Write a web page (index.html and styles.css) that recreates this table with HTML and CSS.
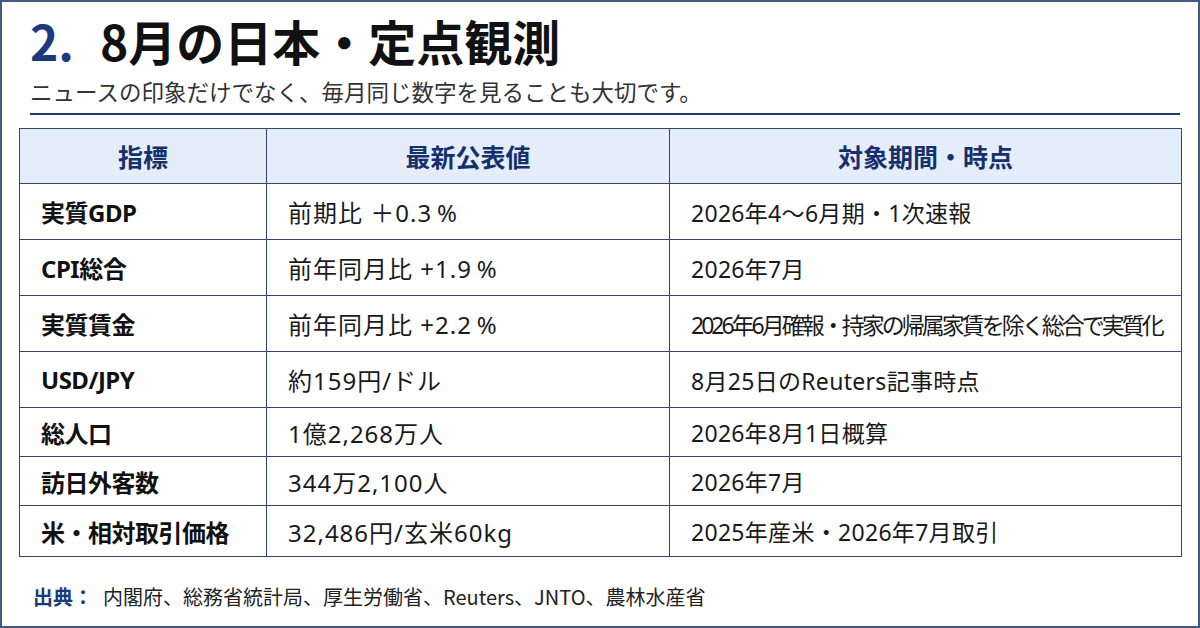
FILE: index.html
```html
<!DOCTYPE html>
<html lang="ja">
<head>
<meta charset="utf-8">
<link rel="stylesheet" href="styles.css">
</head>
<body>
<div class="page">
  <header class="head">
    <h1 class="title"><span class="num">2.</span>8月の日本・定点観測</h1>
    <p class="sub">ニュースの印象だけでなく、毎月同じ数字を見ることも大切です。</p>
    <div class="rule"></div>
  </header>
  <table class="data">
    <colgroup>
      <col class="c1"><col class="c2"><col class="c3">
    </colgroup>
    <thead>
      <tr><th>指標</th><th>最新公表値</th><th>対象期間・時点</th></tr>
    </thead>
    <tbody>
      <tr class="tall"><td class="k">実質GDP</td><td class="v">前期比 ＋0.3&#8201;%</td><td class="p">2026年4～6月期・1次速報</td></tr>
      <tr class="tall"><td class="k">CPI総合</td><td class="v">前年同月比 +1.9&#8201;%</td><td class="p">2026年7月</td></tr>
      <tr class="tall"><td class="k">実質賃金</td><td class="v">前年同月比 +2.2&#8201;%</td><td class="p tight">2026年6月確報・持家の帰属家賃を除く総合で実質化</td></tr>
      <tr class="tall"><td class="k">USD/JPY</td><td class="v">約159円/ドル</td><td class="p">8月25日のReuters記事時点</td></tr>
      <tr class="short"><td class="k">総人口</td><td class="v">1億2,268万人</td><td class="p">2026年8月1日概算</td></tr>
      <tr class="short"><td class="k">訪日外客数</td><td class="v">344万2,100人</td><td class="p">2026年7月</td></tr>
      <tr class="last"><td class="k">米・相対取引価格</td><td class="v">32,486円/玄米60kg</td><td class="p">2025年産米・2026年7月取引</td></tr>
    </tbody>
  </table>
  <footer class="foot"><span class="src">出典：</span>内閣府、総務省統計局、厚生労働省、Reuters、JNTO、農林水産省</footer>
</div>
</body>
</html>
```
FILE: styles.css
```css
html, body {
  margin: 0;
  padding: 0;
  background: #ffffff;
}
body {
  font-family: "Noto Sans CJK JP", "Noto Sans", sans-serif;
  color: #111111;
}
.page {
  width: 1200px;
  height: 628px;
  box-sizing: border-box;
  border: 2px solid #44577f;
  padding: 0 17px;
  display: flex;
  flex-direction: column;
}
.head {
  padding: 0 1px 0 11px;
}
.title {
  margin: 0;
  padding-top: 8px;
  font-size: 48px;
  line-height: 60px;
  font-weight: 700;
  color: #111111;
}
.num {
  color: #1b3a7c;
  margin-right: 26px;
}
.sub {
  margin: 8px 0 0 0;
  font-size: 22.5px;
  line-height: 26px;
  color: #333333;
  font-weight: 400;
}
.rule {
  margin-top: 9px;
  height: 2px;
  background: #1e3672;
}
.data {
  margin-top: 13px;
  width: 1162px;
  border-collapse: collapse;
  table-layout: fixed;
  border: 1.5px solid #2b3c6b;
}
.c1 { width: 247px; }
.c2 { width: 403px; }
.c3 { width: 512px; }
.data th, .data td {
  border: 1.5px solid #34466f;
  padding: 0 0 0 21px;
  vertical-align: middle;
  white-space: nowrap;
  font-family: "Noto Sans", "Noto Sans CJK JP", sans-serif;
}
.data th {
  height: 54px;
  background: #e4edf9;
  color: #16306e;
  font-size: 25px;
  font-weight: 700;
  text-align: center;
  padding: 0;
}
.tall td { height: 55px; }
.short td { height: 48px; }
.last td { height: 50px; }
.k {
  font-size: 24px;
  font-weight: 700;
  color: #111111;
  letter-spacing: -0.5px;
}
.v {
  font-size: 24px;
  letter-spacing: 1px;
  color: #1a1a1a;
}
.p {
  font-size: 23px;
  letter-spacing: 0.3px;
  color: #1a1a1a;
}
.p.tight {
  letter-spacing: -3px;
}
.foot {
  margin-top: 25px;
  padding-left: 14px;
  font-size: 20px;
  line-height: 30px;
  color: #222222;
}
.src {
  color: #1b3a7c;
  font-weight: 700;
  margin-right: 10px;
}
```
